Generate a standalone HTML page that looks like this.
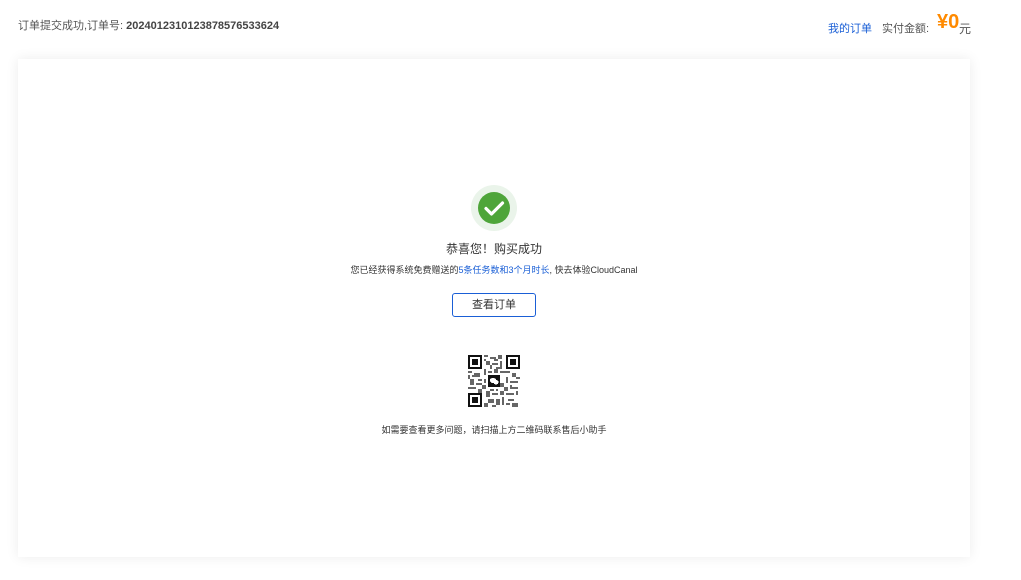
<!DOCTYPE html>
<html><head><meta charset="utf-8"><style>
body{margin:0;width:1021px;height:580px;background:#fff;font-family:"Liberation Sans","Noto Sans CJK SC",sans-serif;position:relative;overflow:hidden}
.a{position:absolute;white-space:nowrap}
.card{position:absolute;left:18px;top:59px;width:952px;height:498px;background:#fff;box-shadow:0 0 12px rgba(0,0,0,0.08)}
</style></head><body>
<div class="a" style="left:18px;top:17px;font-size:11px;color:#555">订单提交成功,订单号: <b style="color:#444">2024012310123878576533624</b></div>
<div class="a" style="left:828px;top:20px;font-size:11px;color:#1a5fd6">我的订单</div>
<div class="a" style="left:882px;top:20px;font-size:11px;color:#555">实付金额:</div>
<div class="a" style="left:937px;top:11px;font-size:20px;font-weight:bold;color:#ff8a00">¥0</div>
<div class="a" style="left:959px;top:20px;font-size:12px;color:#555">元</div>
<div class="card"></div>
<svg class="a" style="left:471px;top:185px" width="46" height="46" viewBox="0 0 46 46">
<circle cx="23" cy="23" r="23" fill="#eaf4ea"/><circle cx="23" cy="23" r="16" fill="#4ea53a"/>
<path d="M15 23.5l5.5 5.5 11-11" stroke="#fff" stroke-width="3.2" fill="none" stroke-linecap="round" stroke-linejoin="round"/></svg>
<div class="a" style="left:0;width:988px;text-align:center;top:240px;font-size:12px;color:#333">恭喜您！购买成功</div>
<div class="a" style="left:0;width:988px;text-align:center;top:263px;font-size:9px;color:#333">您已经获得系统免费赠送的<span style="color:#1a5fd6">5条任务数和3个月时长</span>, 快去体验CloudCanal</div>
<div class="a" style="left:452px;top:293px;width:82px;height:22px;border:1px solid #1a5fd6;border-radius:3px;text-align:center;line-height:22px;font-size:11px;color:#333">查看订单</div>
<svg class="a" style="left:468px;top:355px" width="52" height="52" viewBox="0 0 26 26" shape-rendering="crispEdges">
<rect width="26" height="26" fill="#fff"/>
<g fill="#666">
<rect x="8" y="0" width="2" height="1"/><rect x="11" y="1" width="3" height="1"/><rect x="15" y="0" width="2" height="2"/><rect x="9" y="3" width="2" height="2"/><rect x="12" y="4" width="3" height="1"/><rect x="16" y="3" width="1" height="3"/><rect x="8" y="2" width="1" height="1"/><rect x="13" y="2" width="2" height="1"/><rect x="11" y="5" width="1" height="2"/><rect x="14" y="6" width="3" height="1"/>
<rect x="0" y="8" width="2" height="1"/><rect x="3" y="9" width="3" height="2"/><rect x="1" y="12" width="2" height="3"/><rect x="4" y="14" width="3" height="1"/><rect x="0" y="16" width="4" height="1"/><rect x="5" y="17" width="2" height="2"/><rect x="2" y="10" width="1" height="1"/><rect x="5" y="12" width="2" height="1"/><rect x="0" y="10" width="1" height="2"/>
<rect x="18" y="8" width="3" height="1"/><rect x="22" y="9" width="2" height="2"/><rect x="19" y="11" width="1" height="3"/><rect x="21" y="13" width="4" height="1"/><rect x="18" y="16" width="2" height="2"/><rect x="22" y="16" width="3" height="1"/><rect x="24" y="11" width="2" height="1"/><rect x="21" y="15" width="1" height="2"/><rect x="24" y="18" width="1" height="2"/>
<rect x="9" y="18" width="2" height="3"/><rect x="12" y="19" width="3" height="1"/><rect x="16" y="18" width="2" height="2"/><rect x="19" y="19" width="4" height="1"/><rect x="10" y="22" width="3" height="2"/><rect x="14" y="22" width="2" height="3"/><rect x="17" y="21" width="1" height="4"/><rect x="20" y="22" width="3" height="1"/><rect x="22" y="24" width="3" height="2"/><rect x="8" y="24" width="2" height="2"/><rect x="12" y="25" width="2" height="1"/><rect x="19" y="24" width="2" height="1"/>
<rect x="8" y="7" width="1" height="3"/><rect x="16" y="8" width="2" height="1"/><rect x="7" y="15" width="2" height="2"/><rect x="16" y="14" width="2" height="2"/><rect x="10" y="8" width="2" height="1"/><rect x="13" y="7" width="2" height="2"/><rect x="8" y="12" width="1" height="2"/><rect x="11" y="17" width="2" height="1"/><rect x="14" y="17" width="1" height="1"/>
</g>
<g fill="#111"><rect x="0" y="0" width="7" height="7"/><rect x="19" y="0" width="7" height="7"/><rect x="0" y="19" width="7" height="7"/></g>
<g fill="#fff"><rect x="1" y="1" width="5" height="5"/><rect x="20" y="1" width="5" height="5"/><rect x="1" y="20" width="5" height="5"/></g>
<g fill="#111"><rect x="2" y="2" width="3" height="3"/><rect x="21" y="2" width="3" height="3"/><rect x="2" y="21" width="3" height="3"/>
<rect x="10" y="10" width="6" height="6"/></g>
<ellipse cx="12.5" cy="12.7" rx="1.6" ry="1.3" fill="#fff"/><ellipse cx="14" cy="13.6" rx="1.3" ry="1.1" fill="#fff"/>
</svg>
<div class="a" style="left:0;width:988px;text-align:center;top:423px;font-size:9px;color:#333">如需要查看更多问题，请扫描上方二维码联系售后小助手</div>
</body></html>
